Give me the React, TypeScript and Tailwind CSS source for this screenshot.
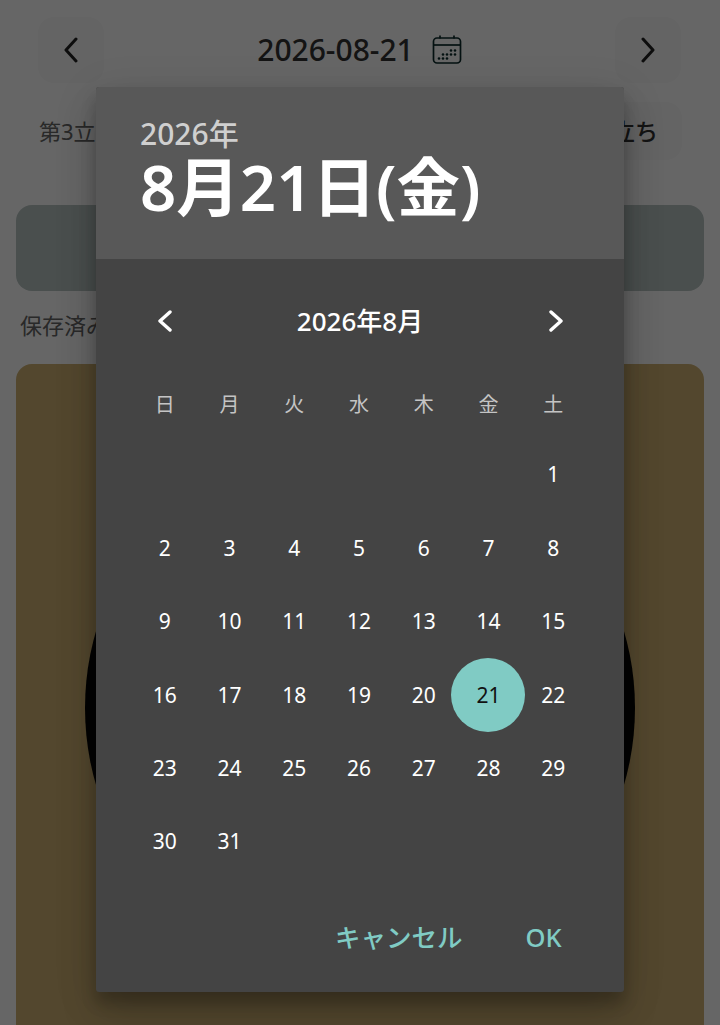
const weekdays = ["日", "月", "火", "水", "木", "金", "土"];
const blanks = [0, 1, 2, 3, 4, 5];
const days = Array.from({ length: 31 }, (_, i) => i + 1);

function Chevron({ dir, className }: { dir: "left" | "right"; className: string }) {
  return (
    <svg className={className} viewBox="0 0 14 26" fill="none" stroke="currentColor" strokeLinecap="round" strokeLinejoin="round">
      <polyline points={dir === "left" ? "12,2 2,13 12,24" : "2,2 12,13 2,24"} strokeWidth="3" />
    </svg>
  );
}

function SmallChevron({ dir }: { dir: "left" | "right" }) {
  return (
    <svg className="h-[22px] w-[16px] text-white" viewBox="0 0 16 22" fill="none" stroke="currentColor" strokeLinecap="round" strokeLinejoin="round">
      <polyline points={dir === "left" ? "13,2 3,11 13,20" : "3,2 13,11 3,20"} strokeWidth="3.4" />
    </svg>
  );
}

function CalendarIcon() {
  const dots = [
    [19, 15.5], [23, 15.5],
    [11, 19.5], [15, 19.5], [19, 19.5], [23, 19.5],
    [7, 23.5], [11, 23.5], [15, 23.5],
  ];
  return (
    <svg className="w-[30px] h-[30px] text-[#0c2b2b]" viewBox="0 0 30 30" fill="none" stroke="currentColor" strokeWidth="1.7">
      <rect x="1.5" y="3" width="27" height="25" rx="3.5" />
      <line x1="1.5" y1="10" x2="28.5" y2="10" />
      <line x1="8" y1="0.5" x2="8" y2="3.5" />
      <line x1="22" y1="0.5" x2="22" y2="3.5" />
      {dots.map(([cx, cy]) => (
        <circle key={`${cx}-${cy}`} cx={cx} cy={cy} r="1.3" fill="currentColor" stroke="none" />
      ))}
    </svg>
  );
}

export default function App() {
  return (
    <div className="relative h-[1025px] w-[720px] overflow-hidden bg-white font-['Noto_Sans','Noto_Sans_CJK_JP',sans-serif]">
      {/* Page behind the dialog */}
      <div className="flex items-center justify-between pl-[38px] pr-[39px] pt-[17px]">
        <button className="flex h-[66px] w-[66px] items-center justify-center rounded-2xl bg-[#fafafa]">
          <Chevron dir="left" className="h-[26px] w-[14px] text-[#222]" />
        </button>
        <div className="flex items-center gap-[18px]">
          <span className="text-[30px] font-medium leading-none text-[#333]">2026-08-21</span>
          <CalendarIcon />
        </div>
        <button className="flex h-[66px] w-[66px] items-center justify-center rounded-2xl bg-[#fafafa]">
          <Chevron dir="right" className="h-[26px] w-[14px] text-[#222]" />
        </button>
      </div>

      <div className="mt-[19px] flex h-[58px] items-center justify-between pl-[39px] pr-[38px]">
        <span className="text-[22px] text-[#666]">第3立ち</span>
        <button className="flex h-[58px] items-center rounded-2xl bg-[#fafafa] px-[24px] text-[23px] font-medium text-[#333]">
          立ち
        </button>
      </div>

      <div className="mx-[16px] mt-[45px] h-[86px] rounded-2xl bg-[#b9c5c3]" />

      <p className="mt-[18px] h-[35px] pl-[20px] text-[22px] leading-[32px] text-[#666]">保存済み</p>

      <div className="mx-[16px] mt-[20px] flex h-[720px] justify-center rounded-t-2xl bg-[#cfb273] pt-[69px]">
        <div className="h-[550px] w-[550px] shrink-0 rounded-full bg-[#0a0a0a]" />
      </div>

      {/* Scrim */}
      <div className="absolute inset-0 bg-black/60" />

      {/* Date picker dialog */}
      <div className="absolute left-[96px] top-[87px] w-[528px] overflow-hidden rounded-[3px] bg-[#444444] shadow-[0_24px_38px_rgba(0,0,0,0.14),0_9px_46px_rgba(0,0,0,0.12),0_11px_15px_rgba(0,0,0,0.2)]">
        <div className="h-[172px] bg-[#585858] pl-[44px] pt-[28px]">
          <p className="text-[30px] font-medium leading-[38px] text-[#cfcfcf]">2026年</p>
          <p className="text-[63.5px] font-semibold leading-[68px] text-white">8月21日(金)</p>
        </div>

        <div className="pl-[36.5px] pr-[38.5px] pt-[43px]">
          <div className="flex h-[38px] items-center justify-between pl-[24px] pr-[22px]">
            <SmallChevron dir="left" />
            <span className="text-[26px] font-medium text-white">2026年8月</span>
            <SmallChevron dir="right" />
          </div>

          <div className="mt-[46px] grid grid-cols-7 text-center">
            {weekdays.map((w) => (
              <div key={w} className="flex h-[38px] items-center justify-center text-[20px] text-[#c4c4c4]">
                {w}
              </div>
            ))}
          </div>

          <div className="mt-[14.5px] grid grid-cols-7 auto-rows-[73.4px] text-center">
            {blanks.map((b) => (
              <div key={b} />
            ))}
            {days.map((d) => (
              <div key={d} className="flex items-center justify-center text-[21px] text-white">
                {d === 21 ? (
                  <span className="flex h-[74px] w-[74px] shrink-0 items-center justify-center rounded-full bg-[#80cbc4] text-[#111]">{d}</span>
                ) : (
                  d
                )}
              </div>
            ))}
          </div>

          <div className="mt-[30px] flex h-[56px] items-center justify-end gap-[63px] pr-[24px] text-[25.5px] font-medium text-[#80cbc4]">
            <span>キャンセル</span>
            <span>OK</span>
          </div>
          <div className="h-[27.5px]" />
        </div>
      </div>
    </div>
  );
}
